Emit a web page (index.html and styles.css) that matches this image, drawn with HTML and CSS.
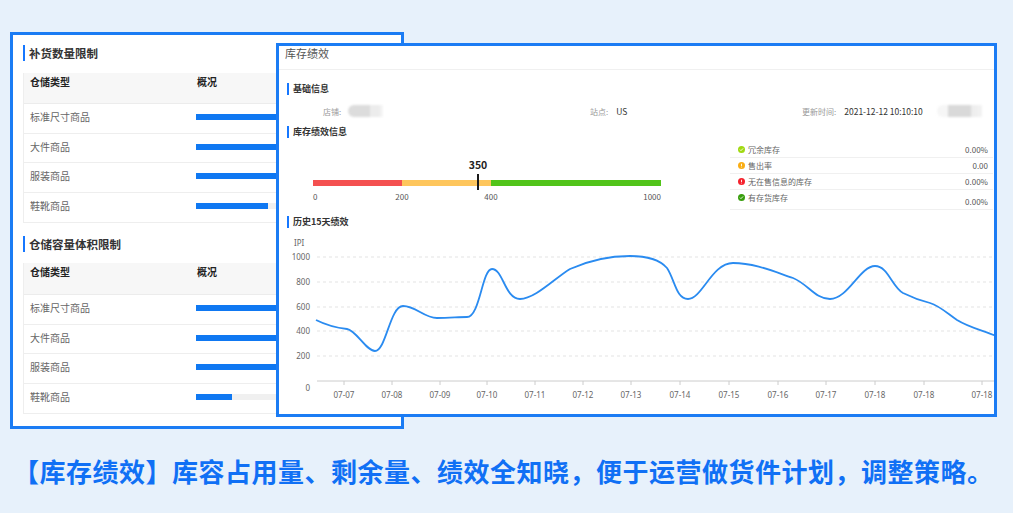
FILE: index.html
```html
<!DOCTYPE html>
<html lang="zh-CN">
<head>
<meta charset="utf-8">
<title>库存绩效</title>
<link rel="stylesheet" href="styles.css">
</head>
<body>
<div class="stage">
  <section class="limits">
    <h2 class="sec-title">补货数量限制</h2>
    <div class="table">
      <div class="thead"><span class="c1">仓储类型</span><span class="c2">概况</span></div>
      <div class="row"><span class="c1">标准尺寸商品</span><span class="track"><i class="fill" style="width:100%"></i></span></div>
      <div class="row"><span class="c1">大件商品</span><span class="track"><i class="fill" style="width:100%"></i></span></div>
      <div class="row"><span class="c1">服装商品</span><span class="track"><i class="fill" style="width:100%"></i></span></div>
      <div class="row"><span class="c1">鞋靴商品</span><span class="track"><i class="fill" style="width:38%"></i></span></div>
    </div>
    <h2 class="sec-title second">仓储容量体积限制</h2>
    <div class="table">
      <div class="thead tall"><span class="c1">仓储类型</span><span class="c2">概况</span></div>
      <div class="row"><span class="c1">标准尺寸商品</span><span class="track"><i class="fill" style="width:100%"></i></span></div>
      <div class="row"><span class="c1">大件商品</span><span class="track"><i class="fill" style="width:100%"></i></span></div>
      <div class="row"><span class="c1">服装商品</span><span class="track"><i class="fill" style="width:100%"></i></span></div>
      <div class="row"><span class="c1">鞋靴商品</span><span class="track"><i class="fill" style="width:19%"></i></span></div>
    </div>
  </section>

  <section class="perf">
    <div class="perf-head">库存绩效</div>
    <div class="perf-body">
      <h3 class="sub-title">基础信息</h3>
      <div class="info">
        <div class="info-item shop"><span class="lbl">店铺:</span><span class="blur blur-a"></span></div>
        <div class="info-item site"><span class="lbl">站点:</span><span class="val">US</span></div>
        <div class="info-item time"><span class="lbl">更新时间:</span><span class="val">2021-12-12 10:10:10</span><span class="blur blur-b"></span></div>
      </div>
      <h3 class="sub-title">库存绩效信息</h3>
      <div class="perf-info">
        <div class="gauge">
          <span class="g-value">350</span>
          <div class="g-bar"><i class="seg red"></i><i class="seg orange"></i><i class="seg green"></i></div>
          <span class="g-marker"></span>
          <span class="g-lbl l0">0</span>
          <span class="g-lbl l200">200</span>
          <span class="g-lbl l400">400</span>
          <span class="g-lbl l1000">1000</span>
        </div>
        <ul class="legend">
          <li><span class="name"><svg class="ico" viewBox="0 0 8 8"><circle cx="4" cy="4" r="4" fill="#a0d911"/><path d="M2.2 4.1l1.2 1.2 2.4-2.5" fill="none" stroke="#fff" stroke-width="1"/></svg>冗余库存</span><span class="num">0.00%</span></li>
          <li><span class="name"><svg class="ico" viewBox="0 0 8 8"><circle cx="4" cy="4" r="4" fill="#faad14"/><path d="M4 2v2.6M4 5.4v0.8" stroke="#fff" stroke-width="1"/></svg>售出率</span><span class="num">0.00</span></li>
          <li><span class="name"><svg class="ico" viewBox="0 0 8 8"><circle cx="4" cy="4" r="4" fill="#f5222d"/><path d="M4 2v2.6M4 5.4v0.8" stroke="#fff" stroke-width="1"/></svg>无在售信息的库存</span><span class="num">0.00%</span></li>
          <li class="last"><span class="name"><svg class="ico" viewBox="0 0 8 8"><circle cx="4" cy="4" r="4" fill="#389e0d"/><path d="M2.2 4.1l1.2 1.2 2.4-2.5" fill="none" stroke="#fff" stroke-width="1"/></svg>有存货库存</span><span class="num">0.00%</span></li>
        </ul>
      </div>
      <h3 class="sub-title hist">历史15天绩效</h3>
    </div>
    <svg class="chart" width="715" height="180" viewBox="279 230 715 180">
      <text x="294" y="246" class="ax">IPI</text>
      <g class="ylab">
        <text x="310" y="260">1000</text>
        <text x="310" y="285">800</text>
        <text x="310" y="310">600</text>
        <text x="310" y="334">400</text>
        <text x="310" y="359">200</text>
        <text x="310" y="391">0</text>
      </g>
      <g class="grid">
        <line x1="317" y1="257" x2="994" y2="257"/>
        <line x1="317" y1="282" x2="994" y2="282"/>
        <line x1="317" y1="307" x2="994" y2="307"/>
        <line x1="317" y1="331" x2="994" y2="331"/>
        <line x1="317" y1="356" x2="994" y2="356"/>
      </g>
      <line class="axis" x1="317" y1="381" x2="994" y2="381"/>
      <path class="ticks" d="M344 381v4M392 381v4M440 381v4M487 381v4M535 381v4M583 381v4M631 381v4M680 381v4M729 381v4M778 381v4M826 381v4M875 381v4M924 381v4M982 381v4"/>
      <g class="xlab">
        <text x="344" y="398">07-07</text>
        <text x="392" y="398">07-08</text>
        <text x="440" y="398">07-09</text>
        <text x="487" y="398">07-10</text>
        <text x="535" y="398">07-11</text>
        <text x="583" y="398">07-12</text>
        <text x="631" y="398">07-13</text>
        <text x="680" y="398">07-14</text>
        <text x="729" y="398">07-15</text>
        <text x="778" y="398">07-16</text>
        <text x="826" y="398">07-17</text>
        <text x="875" y="398">07-18</text>
        <text x="924" y="398">07-18</text>
        <text x="982" y="398">07-18</text>
      </g>
      <path class="line" d="M316 320 C328 326 338 328 347 329 C356 330 366 351 375 351 C386 351 390 306 403 306 C416 306 424 318 437 318 C450 318 458 317 467 317 C480 317 482 269 492 269 C503 269 505 299 520 299 C535 299 555 278 570 269 C590 260 610 256 630 256 C648 256 660 260 667 268 C675 280 676 299 688 299 C702 299 712 263 733 263 C755 263 775 272 793 278 C808 284 815 299 830 299 C848 299 860 266 875 266 C888 266 892 287 903 293 C915 299 922 301 930 303 C940 306 948 314 957 320 C970 328 985 331 996 336"/>
    </svg>
  </section>

  <p class="caption">【库存绩效】库容占用量、剩余量、绩效全知晓，便于运营做货件计划，调整策略。</p>
</div>
</body>
</html>
```

FILE: styles.css
```css
* { box-sizing: border-box; }
html, body {
  margin: 0;
  padding: 0;
  background: #e7f1fb;
  font-family: "Noto Sans CJK SC", "Noto Sans", sans-serif;
}
.stage {
  position: relative;
  width: 1013px;
  height: 513px;
  padding-top: 32px;
  overflow: hidden;
  display: flex;
  flex-direction: column;
}

/* ---------- left panel ---------- */
.limits {
  margin-left: 10px;
  width: 394px;
  height: 397px;
  border: 3px solid #1b7cf4;
  background: #fff;
  padding: 10px 10px 0;
  flex: none;
}
.sec-title {
  margin: 0;
  height: 16px;
  line-height: 16px;
  font-size: 11.5px;
  font-weight: bold;
  color: #333;
  border-left: 2px solid #1677ff;
  padding-left: 4px;
}
.sec-title.second { margin-top: 13px; }
.table {
  margin-top: 12px;
  border: 1px solid #eeeeee;
  border-top: 0;
}
.sec-title.second + .table { margin-top: 11px; }
.thead {
  height: 31px;
  background: #f7f7f7;
  display: flex;
  align-items: flex-start;
  padding-top: 2px;
  font-size: 10px;
  font-weight: bold;
  line-height: 14px;
  color: #222;
  border-bottom: 1px solid #ececec;
}
.thead.tall { height: 32px; }
.c1 { width: 172px; padding-left: 6px; flex: none; }
.c2 { padding-left: 1px; }
.row {
  height: 29.5px;
  display: flex;
  align-items: center;
  padding-bottom: 3px;
  font-size: 10px;
  color: #666;
  border-bottom: 1px solid #eeeeee;
}
.row:last-child { border-bottom: 0; }
.track {
  width: 190px;
  height: 6px;
  margin-top: 1px;
  background: #f0f0f0;
  display: block;
}
.fill {
  display: block;
  height: 100%;
  background: #0f78f2;
}

/* ---------- right panel ---------- */
.perf {
  position: absolute;
  left: 276px;
  top: 43px;
  width: 721px;
  height: 374px;
  border: 3px solid #1b7cf4;
  background: #fff;
}
.perf-head {
  height: 24px;
  padding-left: 6px;
  padding-top: 1px;
  font-size: 11px;
  line-height: 13px;
  color: #555;
  border-bottom: 1px solid #f0f0f0;
}
.perf-body { padding: 0 8px; }
.sub-title {
  margin: 13px 0 0;
  height: 12px;
  line-height: 12px;
  font-size: 9px;
  font-weight: bold;
  color: #333;
  border-left: 2px solid #1677ff;
  padding-left: 4px;
}
.info {
  margin-top: 10px;
  height: 12px;
  display: flex;
  align-items: center;
  font-size: 8.5px;
}
.info + .sub-title { margin-top: 9px; }
.info-item { display: flex; align-items: center; height: 12px; }
.shop { width: 293px; padding-left: 36px; }
.site { width: 210px; padding-left: 10px; }
.time { padding-left: 12px; }
.lbl { color: #999; font-size: 8px; margin-right: 8px; }
.shop .lbl { margin-right: 7px; }
.val { color: #333; }
.blur {
  display: block;
  height: 12px;
  filter: blur(0.8px);
}
.blur-a {
  width: 35px;
  border-radius: 6px 0 0 6px;
  background: linear-gradient(90deg, #dcdcdc 0, #dcdcdc 62%, #ececec 62%, #ececec 88%, #f8f8f8 100%);
}
.blur-b {
  width: 45px;
  margin-left: 14px;
  border-radius: 6px 0 0 6px;
  background: linear-gradient(90deg, #f6f6f6 0, #f6f6f6 25%, #d9d9d9 25%, #d9d9d9 75%, #ececec 75%, #f3f3f3 100%);
}

.perf-info {
  margin-top: 4px;
  height: 68px;
  display: flex;
}
.gauge {
  position: relative;
  width: 443px;
  flex: none;
}
.g-value {
  position: absolute;
  left: 191px;
  top: 17px;
  transform: translateX(-50%);
  font-size: 10.5px;
  font-weight: bold;
  line-height: 12px;
  color: #222;
}
.g-bar {
  margin: 38px 0 0 26px;
  width: 348px;
  height: 6px;
  display: flex;
}
.seg { display: block; height: 100%; }
.seg.red { width: 89px; background: #f45050; }
.seg.orange { width: 89px; background: #fec65d; }
.seg.green { width: 170px; background: #52c41a; }
.g-marker {
  position: absolute;
  left: 190px;
  top: 32px;
  width: 2px;
  height: 16px;
  background: #1a1a1a;
}
.g-lbl {
  position: absolute;
  top: 50px;
  font-size: 8px;
  line-height: 10px;
  color: #555;
}
.l0 { left: 26px; }
.l200 { left: 115px; transform: translateX(-50%); }
.l400 { left: 204px; transform: translateX(-50%); }
.l1000 { left: 374px; transform: translateX(-100%); }

.legend {
  list-style: none;
  margin: 0;
  padding: 0;
  width: 263px;
  flex: none;
}
.legend li {
  height: 16px;
  display: flex;
  align-items: center;
  justify-content: space-between;
  padding: 0 5px 0 8px;
  font-size: 8px;
  color: #666;
  border-bottom: 1px solid #f0f0f0;
}
.legend li.last { height: 20px; align-items: flex-start; padding-top: 2px; }
.legend li.last .num { margin-top: 4px; }
.name { display: flex; align-items: center; }
.ico { width: 7px; height: 7px; margin-right: 3px; display: block; }
.num { color: #555; }

.sub-title.hist { margin-top: 6px; }
.chart { display: block; margin-top: 2px; }
.chart text { font-family: "Noto Sans", "Noto Sans CJK SC", sans-serif; font-size: 8px; fill: #666; }
.chart .ylab text { text-anchor: end; }
.chart .xlab text { text-anchor: middle; }
.grid line { stroke: #e3e3e3; stroke-width: 1; stroke-dasharray: 3 3; }
.axis { stroke: #cccccc; stroke-width: 1; }
.ticks { stroke: #cccccc; stroke-width: 1; fill: none; }
.line { fill: none; stroke: #2a8bf0; stroke-width: 1.8; }

/* ---------- caption ---------- */
.caption {
  margin: 27px 0 0;
  padding-left: 13px;
  font-size: 26px;
  font-weight: bold;
  letter-spacing: 0.5px;
  line-height: 30px;
  color: #1070f5;
  white-space: nowrap;
}
```
